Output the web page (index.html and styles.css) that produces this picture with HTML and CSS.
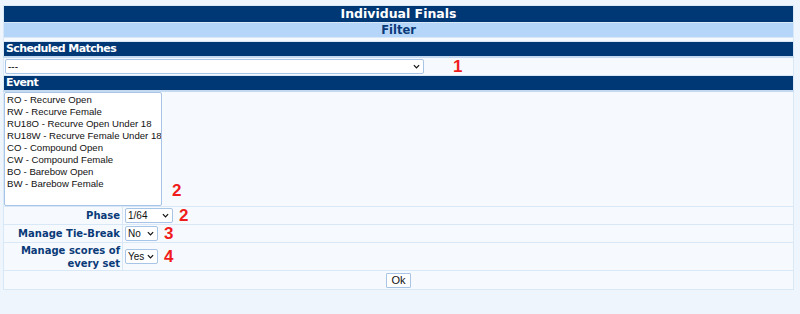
FILE: index.html
```html
<!DOCTYPE html>
<html lang="en">
<head>
    <meta charset="UTF-8">
    <title>Individual Finals</title>
    <link rel="stylesheet" href="styles.css">
</head>
<body>
    <table class="frame">
        <tr><td colspan="2" class="title">Individual Finals</td></tr>
        <tr><td colspan="2" class="subtitle">Filter</td></tr>
        <tr><td colspan="2" class="spacer"></td></tr>

        <!-- Scheduled matches -->
        <tr><td colspan="2" class="head">Scheduled Matches</td></tr>
        <tr>
            <td colspan="2" class="field match-cell">
                <span class="drop wide">
                    <select><option>---</option></select>
                    <svg viewBox="0 0 8 5"><path d="M1 1 L4 4 L7 1"/></svg>
                </span><span class="mark far">1</span>
            </td>
        </tr>

        <!-- Events -->
        <tr><td colspan="2" class="head">Event</td></tr>
        <tr>
            <td colspan="2" class="field event-cell">
                <select class="events" multiple size="9">
                    <option>RO - Recurve Open</option>
                    <option>RW - Recurve Female</option>
                    <option>RU18O - Recurve Open Under 18</option>
                    <option>RU18W - Recurve Female Under 18</option>
                    <option>CO - Compound Open</option>
                    <option>CW - Compound Female</option>
                    <option>BO - Barebow Open</option>
                    <option>BW - Barebow Female</option>
                </select><span class="mark list-mark">2</span>
            </td>
        </tr>

        <tr class="opt">
            <th>Phase</th>
            <td>
                <span class="drop phase">
                    <select><option>1/64</option></select>
                    <svg viewBox="0 0 8 5"><path d="M1 1 L4 4 L7 1"/></svg>
                </span><span class="mark">2</span>
            </td>
        </tr>
        <tr class="opt">
            <th>Manage Tie-Break</th>
            <td>
                <span class="drop small">
                    <select><option>No</option></select>
                    <svg viewBox="0 0 8 5"><path d="M1 1 L4 4 L7 1"/></svg>
                </span><span class="mark">3</span>
            </td>
        </tr>
        <tr class="opt tall">
            <th>Manage scores of<br>every set</th>
            <td>
                <span class="drop small">
                    <select><option>Yes</option></select>
                    <svg viewBox="0 0 8 5"><path d="M1 1 L4 4 L7 1"/></svg>
                </span><span class="mark">4</span>
            </td>
        </tr>
        <tr>
            <td colspan="2" class="buttons"><button>Ok</button></td>
        </tr>
    </table>
</body>
</html>
```

FILE: styles.css
```css
body {
    margin: 0;
    padding: 5px 0 0 3px;
    background-color: #eef5fc;
    font-family: "DejaVu Sans", Verdana, sans-serif;
}
.frame {
    width: 791px;
    border-collapse: collapse;
    background-color: #f6faff;
}
.frame td, .frame th {
    border: 1px solid #d9e8f7;
    padding: 0;
    line-height: 14px;
}
.title {
    height: 16px;
    background-color: #003876;
    color: #fff;
    font-size: 12.5px;
    font-weight: bold;
    text-align: center;
}
.subtitle {
    height: 14px;
    background-color: #b5d6f8;
    color: #0a3a78;
    font-size: 11.5px;
    font-weight: bold;
    text-align: center;
}
.spacer {
    height: 3px;
}
.head {
    height: 14px;
    background-color: #003876;
    color: #fff;
    font-size: 11px;
    letter-spacing: -0.6px;
    font-weight: bold;
    padding-left: 2px !important;
    border-bottom: 2px solid #c4daf0 !important;
}
.field {
    padding-left: 1px !important;
}
.match-cell {
    height: 17px;
}
.event-cell {
    height: 114px;
    padding-left: 0 !important;
}
.drop {
    position: relative;
    display: inline-block;
    vertical-align: middle;
}
.drop select {
    -webkit-appearance: none;
    appearance: none;
    display: block;
    box-sizing: border-box;
    height: 15px;
    padding: 0 0 0 2px;
    border: 1px solid #a8c4e6;
    border-radius: 2px;
    background: #fff;
    font-family: "Liberation Sans", Arial, sans-serif;
    font-size: 10px;
    color: #111;
}
.drop svg {
    position: absolute;
    right: 4px;
    top: 5px;
    width: 7px;
    height: 5px;
    fill: none;
    stroke: #111;
    stroke-width: 1.4;
}
.wide select {
    width: 419px;
}
.phase select {
    width: 48px;
}
.small select {
    width: 33px;
}
.events {
    box-sizing: border-box;
    width: 158px;
    height: 114px;
    margin: 0;
    padding: 1px 0;
    border: 1px solid #a8c4e6;
    border-radius: 2px;
    background: #fff;
    font-family: "Liberation Sans", Arial, sans-serif;
    font-size: 9.6px;
    color: #111;
    overflow: hidden;
    vertical-align: bottom;
}
.events option {
    padding: 0 2px;
    line-height: 12px;
    height: 12px;
}
.mark {
    color: #f01c1c;
    font-family: "Liberation Sans", Arial, sans-serif;
    font-weight: bold;
    font-size: 17px;
    line-height: 14px;
    margin-left: 6px;
    vertical-align: middle;
}
.mark.far {
    margin-left: 29px;
}
.list-mark {
    margin-left: 10px;
    vertical-align: 8px;
}
.opt th {
    width: 116px;
    height: 17px;
    padding-right: 2px !important;
    text-align: right;
    color: #0a3a78;
    font-size: 10px;
    font-weight: bold;
    line-height: 13px;
}
.opt td {
    padding-left: 2px !important;
}
.opt.tall th {
    height: 27px;
}
.buttons {
    height: 18px;
    text-align: center;
}
.buttons button {
    height: 15px;
    padding: 0 4px;
    border: 1px solid #a8c4e6;
    border-radius: 1px;
    background: #fff;
    font-family: "Liberation Sans", Arial, sans-serif;
    font-size: 11px;
    color: #111;
    vertical-align: middle;
}
```
